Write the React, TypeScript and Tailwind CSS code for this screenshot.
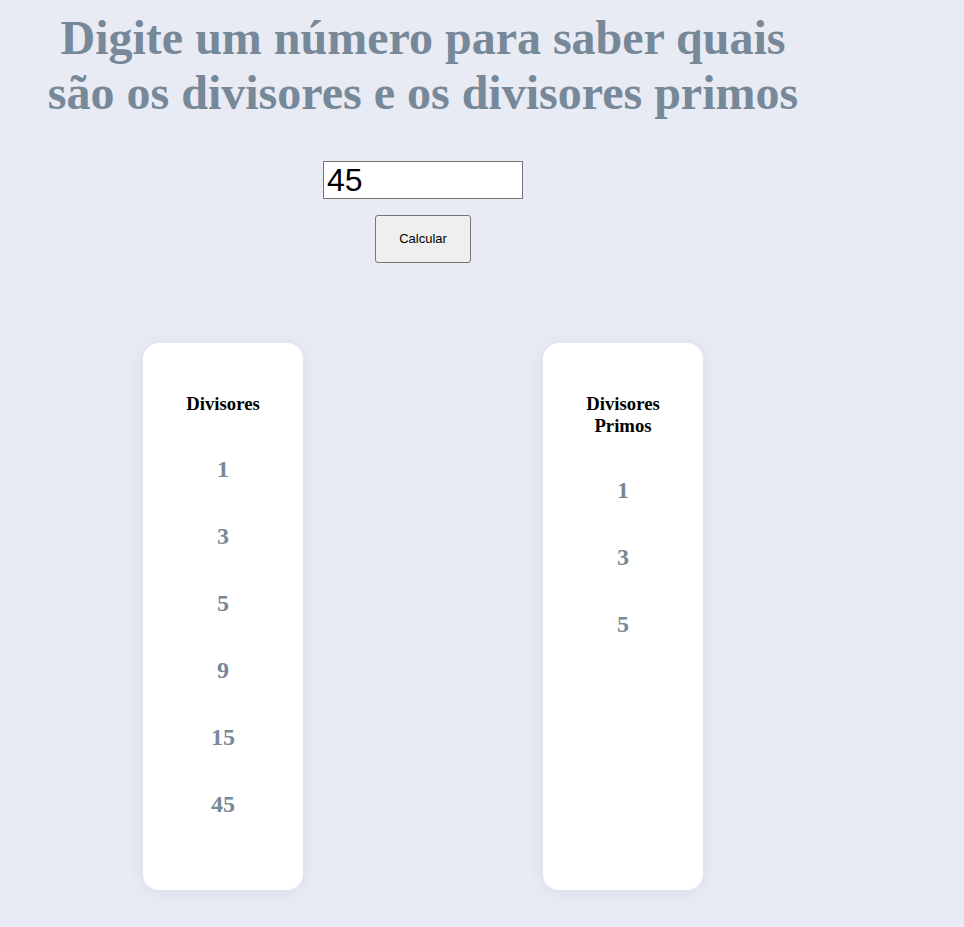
import React from "react";

const divisores = [1, 3, 5, 9, 15, 45];
const primos = [1, 3, 5];

function ResultCard({ title, values }: { title: React.ReactNode; values: number[] }) {
  return (
    <div className="w-[160px] h-[547px] bg-white rounded-2xl shadow-[0_2px_18px_rgba(60,70,110,0.08)] flex flex-col items-center pt-[50px]">
      <h3 className="text-[18.72px] leading-[21.5px] font-bold text-black text-center">{title}</h3>
      <div className="flex flex-col items-center gap-[39px] mt-[40px]">
        {values.map((v) => (
          <span key={v} className="text-[24px] leading-[28px] font-bold text-[#778899]">
            {v}
          </span>
        ))}
      </div>
    </div>
  );
}

export default function App() {
  return (
    <div className="min-h-[927px] bg-[#e8ebf4] font-['Liberation_Serif',serif]">
      <div className="w-[846px] flex flex-col items-center pt-[10px]">
        <h1 className="text-[48px] leading-[55px] font-bold text-[#778899] text-center">
          Digite um número para saber quais
          <br />
          são os divisores e os divisores primos
        </h1>

        <input
          type="text"
          defaultValue="45"
          className="mt-[41px] w-[200px] h-[38px] bg-white border border-[#767676] px-[3px] text-[32px] text-black font-['Liberation_Sans',Arial,sans-serif] outline-none"
        />
        <button className="mt-[16px] w-[96px] h-[48px] bg-[#efefef] border border-[#767676] rounded-[3px] text-[13px] text-black font-['Liberation_Sans',Arial,sans-serif]">
          Calcular
        </button>

        <div className="mt-[80px] flex justify-center gap-[240px]">
          <ResultCard title="Divisores" values={divisores} />
          <ResultCard
            title={
              <>
                Divisores
                <br />
                Primos
              </>
            }
            values={primos}
          />
        </div>
      </div>
    </div>
  );
}
